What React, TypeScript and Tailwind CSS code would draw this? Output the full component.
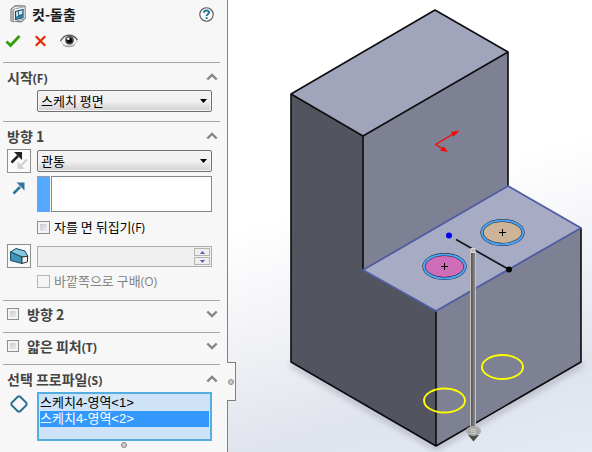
import { useState } from "react";
import type { ReactNode } from "react";

const profiles = ["스케치4-영역<1>", "스케치4-영역<2>"];

function Key({ children }: { children: string }) {
  return <span className="font-['Open_Sans',sans-serif] text-xs">({children})</span>;
}

function Chevron({ open }: { open: boolean }) {
  return (
    <svg width="12" height="8" viewBox="0 0 12 8" fill="none" stroke="#858585" strokeWidth="2.4">
      <path d={open ? "M1.3 6.5 6 2l4.7 4.5" : "M1.3 1.5 6 6l4.7-4.5"} />
    </svg>
  );
}

interface SectionProps {
  title: string;
  hotkey?: string;
  checkable?: boolean;
  initiallyOpen?: boolean;
  children?: ReactNode;
}

function Section({ title, hotkey, checkable, initiallyOpen = false, children }: SectionProps) {
  const [open, setOpen] = useState(initiallyOpen);

  const label = (
    <>
      {title}
      {hotkey && <Key>{hotkey}</Key>}
    </>
  );

  return (
    <section className="mr-[7px] ml-[3px] border-t border-[#a6a6a6]">
      <div className={`flex items-center justify-between pr-[2px] pl-1 ${checkable ? "h-[31px] pb-[5px]" : "h-[27px]"}`}>
        {checkable ? (
          <label className="flex items-center gap-2 text-sm font-bold text-[#444]">
            <CheckBox small />
            <span>{label}</span>
          </label>
        ) : (
          <h2 className="text-sm font-bold text-[#444]">{label}</h2>
        )}
        <button type="button" aria-label={title} aria-expanded={open} onClick={() => setOpen(!open)}>
          <Chevron open={open} />
        </button>
      </div>
      {open && <div className="pr-2 pl-1">{children}</div>}
    </section>
  );
}

function CheckBox({ small, disabled }: { small?: boolean; disabled?: boolean }) {
  return (
    <input
      type="checkbox"
      disabled={disabled}
      className={`shrink-0 appearance-none border checked:bg-[#3399ff] ${small ? "size-3" : "size-[13px]"} ${
        disabled
          ? "border-[#b5b5b5] bg-[#f5f5f5]"
          : "border-[#8e8f8f] bg-linear-to-br from-[#bcc2ca] to-[#f6f6f6] shadow-[inset_0_0_0_2px_#f4f4f4]"
      }`}
    />
  );
}

function DropDown({ label, options }: { label: string; options: string[] }) {
  return (
    <div className="relative w-full">
      <select
        aria-label={label}
        className="block h-[22px] w-full appearance-none rounded-[2px] border border-[#707070] bg-linear-to-b from-[#f2f2f2] from-50% to-[#d0d0d0] pl-[3px] text-[13px] leading-5 text-black shadow-[inset_0_0_0_1px_#f6f6f6]"
      >
        {options.map((o) => (
          <option key={o}>{o}</option>
        ))}
      </select>
      <svg className="pointer-events-none absolute top-[9px] right-[5px]" width="7" height="4" viewBox="0 0 7 4">
        <path d="M0 0h7L3.5 4z" />
      </svg>
    </div>
  );
}

function CutIcon() {
  return (
    <svg width="16" height="18" viewBox="0 0 16 18">
      <path d="M1 4 5 .8 15 1v12.5L11.5 17 1 16z" fill="#e3e5e6" stroke="#555b60" />
      <path d="M1 4 3.5 5v12L1 16z" fill="#a9adb0" />
      <path d="M3.5 4.5 15 1.5v12L3.5 17z" fill="#f4f5f5" stroke="#8a9094" strokeWidth=".8" />
      <path d="M5.5 6.5 13 4.5v8l-7.5 2z" fill="#cfe7f2" stroke="#174b64" strokeWidth="1.2" />
      <path d="M5.5 12 8.500 10.600 13 9.500v3l-7.500 2z" fill="#2e7fa4" />
      <path d="M8.5 5.800v4.800l4.5-1.200" fill="none" stroke="#174b64" strokeWidth=".8" />
    </svg>
  );
}

function HelpIcon() {
  return (
    <svg width="15" height="15" viewBox="0 0 15 15">
      <circle cx="7.5" cy="7.5" r="6.7" fill="#fbfbfb" stroke="#555" strokeWidth="1.1" />
      <path d="M5 5.7C5.1 4.2 6.1 3.5 7.5 3.5s2.5.8 2.5 2C10 7.2 7.6 7.2 7.6 9" fill="none" stroke="#27749b" strokeWidth="2" />
      <path d="M6.6 10.2h2v1.8h-2z" fill="#27749b" />
    </svg>
  );
}

function EyeIcon() {
  return (
    <svg width="18" height="14" viewBox="0 0 18 14">
      <path d="M.8 7.5C3 3.3 6 2 9 2s6 1.3 8.2 5C15 10.7 12 12 9 12S3 11 .8 7.5z" fill="#f7f7f7" stroke="#b0b0b0" strokeWidth=".8" />
      <path d="M.5 7C3 2.4 6 1.2 9 1.2S15 2.5 17.5 6" fill="none" stroke="#55504e" strokeWidth="1.2" />
      <circle cx="9.5" cy="6.3" r="4.5" fill="#58595b" />
      <circle cx="9.5" cy="6.3" r="2.9" fill="#0b0b0b" />
      <circle cx="8.3" cy="4.8" r="1.3" fill="#fff" />
      <path d="M3 11c3 2.3 8.5 2.4 12-.3" fill="none" stroke="#888" strokeWidth=".9" />
    </svg>
  );
}

function ReverseIcon() {
  return (
    <svg width="18" height="20" viewBox="0 0 18 20">
      <path d="M17 8.5 11 14.5" stroke="#cfcfcf" strokeWidth="2.2" />
      <path d="M7.5 10.5v7.5H15z" fill="#d3d3d3" />
      <path d="M1.5 11.5 8 5" stroke="#222" strokeWidth="2.5" />
      <path d="M4 1h8v8z" fill="#222" />
    </svg>
  );
}

function DirectionIcon() {
  return (
    <svg width="14" height="14" viewBox="0 0 14 14">
      <path d="M1.5 12.5 8 6" stroke="#2b7699" strokeWidth="2.5" />
      <path d="M4.5 1.5h8v8z" fill="#2b7699" />
    </svg>
  );
}

function DraftIcon() {
  return (
    <svg width="20" height="18" viewBox="0 0 20 18">
      <path d="M1.5 5 7 1.5 16 4l3 5.5-6 .5z" fill="#86c8de" stroke="#174b62" />
      <path d="M1.5 5 13 10v6.5L1.5 13.5z" fill="#3f96b8" stroke="#174b62" />
      <path d="M13 10l5.5-.8v5.6L13 16.5z" fill="#f2f2f2" stroke="#333" />
    </svg>
  );
}

function PropertyPanel() {
  const [active, setActive] = useState(1);

  return (
    <aside className="w-[228px] shrink-0 border-r border-[#808080] bg-[#f7f7f7]">
      {/* Title and actions */}
      <header className="h-[62px] pt-1 pr-[13px] pl-[5px]">
        <div className="flex h-5 items-center gap-[6px] pl-[5px]">
          <CutIcon />
          <h1 className="flex-1 text-sm font-bold text-[#1c1c1c]">컷-돌출</h1>
          <button type="button" aria-label="도움말">
            <HelpIcon />
          </button>
        </div>
        <div className="mt-[9px] flex h-4 items-center gap-[14px]">
          <button type="button" aria-label="확인">
            <svg width="16" height="14" viewBox="0 0 16 14" fill="none" stroke="#339e0c" strokeWidth="2.8">
              <path d="M1.5 7.5 5.5 11.5 14.5 2" />
            </svg>
          </button>
          <button type="button" aria-label="취소">
            <svg width="11" height="12" viewBox="0 0 11 12" fill="none" stroke="#e52600" strokeWidth="2.2">
              <path d="M.8 1.3 10.2 10.7M10.2 1.3.8 10.7" />
            </svg>
          </button>
          <button type="button" aria-label="미리보기">
            <EyeIcon />
          </button>
        </div>
      </header>

      <Section title="시작" hotkey="F" initiallyOpen>
        <div className="pb-[9px] pl-[30px]">
          <DropDown label="시작" options={["스케치 평면", "곡면/면/평면", "꼭지점", "오프셋"]} />
        </div>
      </Section>

      <Section title="방향 1" initiallyOpen>
        <div className="grid grid-cols-[24px_minmax(0,1fr)] gap-x-[6px] pb-3">
          <button type="button" aria-label="반대 방향" className="flex size-6 items-center justify-center border border-[#8f8f8f] bg-[#fafafa]">
            <ReverseIcon />
          </button>
          <div className="flex items-center">
            <DropDown label="방향 1" options={["관통", "블라인드 형태", "다음까지"]} />
          </div>

          <div className="mt-[3px] flex h-6 items-center justify-center">
            <DirectionIcon />
          </div>
          <div className="mt-[3px] flex h-9 gap-px">
            <div className="w-[13px] border-t border-l border-[#9b9b9b] bg-[#55aaff]" />
            <input aria-label="돌출 방향" className="min-w-0 flex-1 border border-[#828790] bg-white px-1 text-[13px]" />
          </div>

          <label className="col-start-2 mt-[9px] flex h-[13px] items-center gap-1 text-[13px] leading-[13px] text-black">
            <CheckBox />
            <span>
              자를 면 뒤집기<Key>F</Key>
            </span>
          </label>

          <button type="button" aria-label="구배 켜기/끄기" className="mt-[10px] flex size-6 items-center justify-center border border-[#8f8f8f] bg-[#fafafa]">
            <DraftIcon />
          </button>
          <div className="mt-3 flex h-[21px] border border-[#abadb3] bg-[#f0f0f0] p-px">
            <input aria-label="구배 각도" disabled className="min-w-0 flex-1" />
            <div className="flex w-4 flex-col gap-px">
              <button type="button" disabled aria-label="증가" className="flex flex-1 items-center justify-center border border-[#b4b4b4] bg-[#eee]">
                <svg width="5" height="3" viewBox="0 0 5 3" fill="#5261b5">
                  <path d="M0 3h5L2.5 0z" />
                </svg>
              </button>
              <button type="button" disabled aria-label="감소" className="flex flex-1 items-center justify-center border border-[#b4b4b4] bg-[#eee]">
                <svg width="5" height="3" viewBox="0 0 5 3" fill="#5261b5">
                  <path d="M0 0h5L2.5 3z" />
                </svg>
              </button>
            </div>
          </div>

          <label className="col-start-2 mt-[7px] flex h-[13px] items-center gap-1 text-[13px] leading-[13px] text-[#838383]">
            <CheckBox disabled />
            <span>
              바깥쪽으로 구배<Key>O</Key>
            </span>
          </label>
        </div>
      </Section>

      <Section title="방향 2" checkable />
      <Section title="얇은 피처" hotkey="T" checkable />

      <Section title="선택 프로파일" hotkey="S" initiallyOpen>
        <div className="grid grid-cols-[24px_minmax(0,1fr)] gap-x-[6px]">
          <div className="flex h-6 items-center justify-center">
            <svg width="18" height="18" viewBox="0 0 18 18" fill="none" stroke="#286f91" strokeWidth="1.9">
              <path d="M8 1.5h2L16.5 8v2L10 16.5H8L1.5 10V8z" />
            </svg>
          </div>
          <ul
            role="listbox"
            aria-label="선택 프로파일"
            className="h-[49px] border-2 border-[#55aee0] bg-[#cee3f8] p-px font-['Liberation_Sans','Noto_Sans_CJK_KR',sans-serif] text-[13px] leading-4 text-black"
          >
            {profiles.map((p, i) => (
              <li
                key={p}
                role="option"
                aria-selected={i === active}
                onClick={() => setActive(i)}
                className={`h-4 ${i === active ? "bg-[#3399ff] text-white" : ""}`}
              >
                {p}
              </li>
            ))}
          </ul>
        </div>
        <div className="mt-px ml-[114px] size-[6px] rounded-full border border-[#8a8a8a] bg-[#ccc]" />
      </Section>
    </aside>
  );
}

function Viewport() {
  return (
    <main className="relative min-w-0 flex-1 bg-linear-[165deg,#ffffff_42%,#f0f1f5_65%,#dfe3ec_84%,#e6eaf2_100%]">
      <svg className="block max-w-full" width="364" height="452" viewBox="228 0 364 452" strokeLinejoin="round">
        <defs>
          <linearGradient id="rod">
            <stop offset="0" stopColor="#555" />
            <stop offset="1" stopColor="#8b8b8b" />
          </linearGradient>
          <filter id="soft">
            <feGaussianBlur stdDeviation="3" />
          </filter>
        </defs>

        <path d="M291 364 436 448 582 364" fill="none" stroke="#7d8393" strokeWidth="4" opacity=".6" filter="url(#soft)" />

        {/* Solid body */}
        <path d="M291 94 363 136V270L436 311V446L291 362z" fill="#52545f" />
        <path d="M291 94 435 10 508 52 363 136z" fill="#a1a5bb" />
        <path d="M363 136 508 52V186L363 270z" fill="#7e8193" />
        <path d="M363 270 508 186 581 228 436 311z" fill="#a7abc3" />
        <path d="M436 311 581 228V362L436 446z" fill="#7e8193" />

        <g fill="none" stroke="#0d0d0f" strokeWidth="1.6">
          <path d="M291 94 435 10 508 52 363 136zM291 94V362L436 446 581 362V228" />
          <path d="M363 136V270M508 52V186M436 311V446" />
        </g>
        <path d="M363 270 508 186 581 228 436 311z" fill="none" stroke="#515da3" strokeWidth="1.9" />

        {/* Sketch origin */}
        <g stroke="#f00" strokeWidth="1.4" fill="#f00">
          <path d="M454 133.5 435.5 144.5 443 149" fill="none" />
          <path d="M459 131 451.5 132.2 453.5 136.2z" strokeWidth=".5" />
          <path d="M447.5 151.5 440.5 150.4 443.5 146.8z" strokeWidth=".5" />
        </g>

        {/* Selected regions */}
        {[
          { cx: 444.5, cy: 266.5, fill: "#cf6db8" },
          { cx: 502.5, cy: 232.5, fill: "#cdb498" },
        ].map((r) => (
          <g key={r.fill}>
            <ellipse cx={r.cx} cy={r.cy} rx="20.5" ry="12" fill={r.fill} stroke="#222" strokeWidth="3.2" />
            <ellipse cx={r.cx} cy={r.cy} rx="20.5" ry="12" fill="none" stroke="#49a4fa" strokeWidth="2.2" />
            <path d={`M${r.cx - 3.5} ${r.cy}h7m-3.5-3.5v7`} stroke="#000" fill="none" />
          </g>
        ))}

        <path d="M456 239.5 509 269.5" stroke="#14171c" strokeWidth="1.7" />
        <circle cx="509" cy="269.5" r="3" />
        <circle cx="449" cy="235.5" r="3" fill="#0000ee" />

        {/* Depth handle */}
        <path d="M470 251h6v176h-6z" fill="#c4c3bd" />
        <path d="M471 252h4v175h-4z" fill="url(#rod)" />
        <rect x="471" y="248.5" width="4" height="4" fill="#b9b9b5" stroke="#dcdcd8" />
        <path d="M468 435h11L473.5 441.5z" fill="#4c4c4c" />
        <ellipse cx="473.5" cy="431" rx="7.5" ry="5" fill="#aaa" />
        <path d="M476 429.5h-4.5l-.5 1.5 4.5.5-.5 2H471" fill="none" stroke="#ccc" />

        <g fill="none" stroke="#ffff00" strokeWidth="1.9">
          <ellipse cx="444.5" cy="400.5" rx="20.5" ry="12" />
          <ellipse cx="502.5" cy="367" rx="20.5" ry="12" />
        </g>
      </svg>

      {/* Splitter grip, covers the panel edge */}
      <div className="absolute top-[362px] -left-px flex h-[39px] w-[9px] items-center border-y border-r border-[#808080] bg-[#f7f7f7] pl-px">
        <div className="size-[6px] rounded-full border border-[#8a8a8a] bg-[#ccc]" />
      </div>
    </main>
  );
}

export default function App() {
  return (
    <div className="flex min-h-screen bg-white font-['Noto_Sans_CJK_KR',sans-serif]">
      <PropertyPanel />
      <Viewport />
    </div>
  );
}
